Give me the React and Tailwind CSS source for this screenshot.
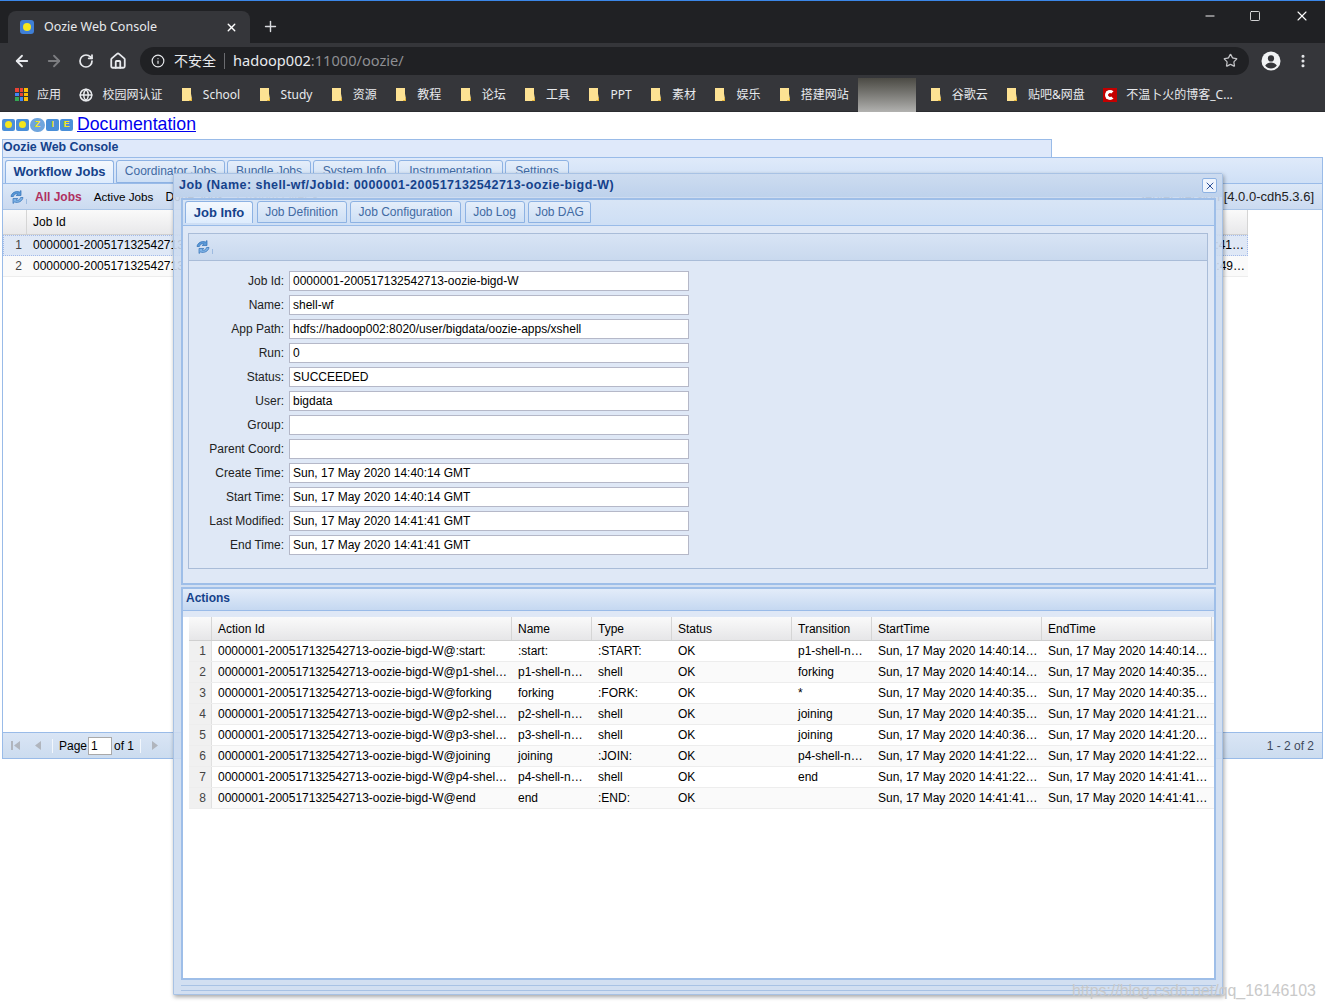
import { ArrowLeft, ArrowRight, RotateCw, Home, Info, Star, Globe, Plus, X, Minus, Square, EllipsisVertical } from "lucide-react"

const marcadores = ["School", "Study", "资源", "教程", "论坛", "工具", "PPT", "素材", "娱乐", "搭建网站"]

const tabsPrincipal = [
  ["Workflow Jobs", "w-[109px]"], ["Coordinator Jobs", "w-[109px]"], ["Bundle Jobs", "w-[84px]"], ["System Info", "w-[83px]"], ["Instrumentation", "w-[105px]"], ["Settings", "w-[64px]"],
]

const tabsJob = [
  ["Job Info", "w-[68px]"], ["Job Definition", "w-[90px]"], ["Job Configuration", "w-[111px]"], ["Job Log", "w-[60px]"], ["Job DAG", "w-[63px]"],
]

const campos = [
  ["Job Id:", "0000001-200517132542713-oozie-bigd-W"],
  ["Name:", "shell-wf"],
  ["App Path:", "hdfs://hadoop002:8020/user/bigdata/oozie-apps/xshell"],
  ["Run:", "0"],
  ["Status:", "SUCCEEDED"],
  ["User:", "bigdata"],
  ["Group:", ""],
  ["Parent Coord:", ""],
  ["Create Time:", "Sun, 17 May 2020 14:40:14 GMT"],
  ["Start Time:", "Sun, 17 May 2020 14:40:14 GMT"],
  ["Last Modified:", "Sun, 17 May 2020 14:41:41 GMT"],
  ["End Time:", "Sun, 17 May 2020 14:41:41 GMT"],
]

const id = "0000001-200517132542713-oozie-bigd-W@"
const acciones = [
  [":start:", ":start:", ":START:", "OK", "p1-shell-node", "14:40:14", "14:40:14"],
  ["p1-shell-node", "p1-shell-node", "shell", "OK", "forking", "14:40:14", "14:40:35"],
  ["forking", "forking", ":FORK:", "OK", "*", "14:40:35", "14:40:35"],
  ["p2-shell-node", "p2-shell-node", "shell", "OK", "joining", "14:40:35", "14:41:21"],
  ["p3-shell-node", "p3-shell-node", "shell", "OK", "joining", "14:40:36", "14:41:20"],
  ["joining", "joining", ":JOIN:", "OK", "p4-shell-node", "14:41:22", "14:41:22"],
  ["p4-shell-node", "p4-shell-node", "shell", "OK", "end", "14:41:22", "14:41:41"],
  ["end", "end", ":END:", "OK", "", "14:41:41", "14:41:41"],
]

const columnas = [
  ["Action Id", "w-[300px]"], ["Name", "w-[80px]"], ["Type", "w-[80px]"], ["Status", "w-[120px]"], ["Transition", "w-[80px]"], ["StartTime", "w-[170px]"], ["EndTime", "w-[170px]"],
]

function Carpeta() {
  return (
    <svg width="13" height="15" viewBox="0 0 13 15" className="shrink-0">
      <path d="M1 1h8l2 11v2H1z" fill="#fde293" />
      <path d="M9 1h1v1h0v10h1v2H9z" fill="#fde293" />
      <path d="M8 13h3v1H8zM10 11h1v2h-1z" fill="#e8b93c" />
    </svg>
  )
}

function Marcador({ texto, icono }) {
  return (
    <div className="flex items-center gap-[9px] whitespace-nowrap">
      {icono || <Carpeta />}
      <span>{texto}</span>
    </div>
  )
}

function IconoApps() {
  const colores = ["#ea4335", "#ea4335", "#fbbc05", "#4285f4", "#ea4335", "#fbbc05", "#34a853", "#4285f4", "#fbbc05"]
  return (
    <div className="grid grid-cols-3 gap-[1px] w-[13px] shrink-0">
      {colores.map((c, i) => (
        <div key={i} className="h-[3.5px]" style={{ backgroundColor: c }} />
      ))}
    </div>
  )
}

function IconoPerfil() {
  return (
    <svg width="20" height="20" viewBox="0 0 20 20" className="ml-[12px] shrink-0">
      <circle cx="10" cy="10" r="9.5" fill="#f1f3f4" />
      <circle cx="10" cy="7.4" r="3.1" fill="#35363a" />
      <path d="M4.2 14.4c1.2-2.1 3.6-3 5.8-3s4.6.9 5.8 3c-1.3 1.8-3.4 3-5.8 3s-4.5-1.2-5.8-3z" fill="#35363a" />
    </svg>
  )
}

function Chrome() {
  return (
    <div className="bg-[#202124] text-white font-['Noto_Sans','Noto_Sans_CJK_SC',sans-serif]">
      <div className="h-[1px] bg-[#3b87e8]" />
      {/* Pestañas */}
      <div className="h-[42px] flex items-end pl-2 relative">
        <div className="w-[242px] h-[32px] bg-[#35363a] rounded-t-lg flex items-center pl-3 pr-3">
          <div className="w-[14px] h-[14px] rounded-[3px] bg-[#3f7fd6] flex items-center justify-center">
            <div className="w-[8px] h-[8px] rounded-full bg-[#f5e61c]" />
          </div>
          <span className="ml-[10px] text-[12.5px] text-[#e8eaed]">Oozie Web Console</span>
          <X size={13} strokeWidth={2.5} className="ml-auto" />
        </div>
        <Plus size={17} strokeWidth={2} className="ml-[12px] mb-[8px] text-[#dadce0]" />
        <div className="ml-auto flex items-center self-start mt-[7px] text-white">
          <Minus size={14} strokeWidth={1.6} className="mr-[32px]" />
          <Square size={12} strokeWidth={1.6} className="mr-[33px]" />
          <X size={16} strokeWidth={1.6} className="mr-[15px]" />
        </div>
      </div>
      {/* Barra de direcciones */}
      <div className="h-[35px] bg-[#35363a] flex items-center pl-[13px] pr-[14px] text-[#e8eaed]">
        <ArrowLeft size={18} strokeWidth={2.4} />
        <ArrowRight size={18} strokeWidth={2.4} className="ml-[14px] text-[#7c7d80]" />
        <RotateCw size={16} strokeWidth={2.6} className="ml-[15px]" />
        <Home size={18} strokeWidth={2.4} className="ml-[15px]" />
        <div className="ml-[13px] w-[1109px] h-[28px] rounded-full bg-[#202124] flex items-center pl-[11px] pr-[11px]">
          <Info size={14} strokeWidth={2} />
          <span className="ml-[9px] text-[14px]">不安全</span>
          <div className="ml-[8px] mr-[8px] w-[1px] h-[16px] bg-[#6b6c70]" />
          <span className="text-[14.6px]">hadoop002<span className="text-[#8e8f93]">:11000/oozie/</span></span>
          <Star size={15} strokeWidth={2} className="ml-auto text-[#c4c5c8]" />
        </div>
        <IconoPerfil />
        <EllipsisVertical size={16} strokeWidth={2.6} className="ml-auto" />
      </div>
      {/* Marcadores */}
      <div className="h-[34px] bg-[#35363a] flex items-center pl-[15px] gap-[18.4px] text-[12px] text-[#e8eaed] border-b border-[#2b2c30]">
        <Marcador texto="应用" icono={<IconoApps />} />
        <Marcador texto="校园网认证" icono={<Globe size={14} strokeWidth={2.5} className="shrink-0" />} />
        {marcadores.map((m) => (
          <Marcador key={m} texto={m} />
        ))}
        <div className="-ml-[9px] -mr-[5px] w-[58px] h-[34px] shrink-0 bg-gradient-to-b from-[#4b4a44] to-[#b2b2b0]" />
        <Marcador texto="谷歌云" />
        <Marcador texto="贴吧&网盘" />
        <Marcador
          texto="不温卜火的博客_C..."
          icono={
            <div className="w-[14px] h-[14px] bg-[#c40000] flex items-center justify-center shrink-0">
              <div className="w-[10px] h-[10px] rounded-full border-[3px] border-white border-r-[#c40000]" />
            </div>
          }
        />
      </div>
    </div>
  )
}

function Logo() {
  const letra = "w-[13px] h-[12px] rounded-[2px] bg-[#4a8fd8] flex items-center justify-center text-[9px] font-bold text-[#f5e61c]"
  return (
    <div className="flex gap-[1px] items-center w-[71px]">
      <div className={letra}><div className="w-[7px] h-[7px] rounded-full bg-[#f5e61c]" /></div>
      <div className={letra}><div className="w-[7px] h-[7px] rounded-full bg-[#f5e61c]" /></div>
      <div className="w-[16px] h-[14px] bg-[#6fa5dd] rounded-[7px] flex items-center justify-center text-[#f5e61c] text-[9px] font-bold">Z</div>
      <div className={letra}>I</div>
      <div className={letra}>E</div>
    </div>
  )
}

// icono de recarga de ExtJS: dos flechas curvas
function Refrescar() {
  return (
    <svg width="18" height="16" viewBox="0 0 18 16" className="shrink-0">
      <path d="M2 7.5C2.6 3.8 6.8 1.6 10.4 3L12 1.5V6.5H7.2L8.8 5C6.8 4.3 5 5.2 4.4 7.5z" fill="#5b9ad8" stroke="#2f6fb5" strokeWidth="0.7" />
      <path d="M14 8.5C13.4 12.2 9.2 14.4 5.6 13L4 14.5V9.5H8.8L7.2 11C9.2 11.7 11 10.8 11.6 8.5z" fill="#7fb3e6" stroke="#2f6fb5" strokeWidth="0.7" />
      <rect x="17" y="10" width="1" height="5" fill="#9dbbe0" />
    </svg>
  )
}

function Tab({ texto, ancho, activo, alto }) {
  return (
    <div
      className={`${ancho} ${alto} shrink-0 flex items-center justify-center rounded-t-[3px] border border-[#8db2e3] whitespace-nowrap overflow-hidden ${
        activo
          ? "bg-gradient-to-b from-[#f4f8fd] to-[#deecfd] border-b-0 font-bold text-[#15428b] text-[13px]"
          : "bg-gradient-to-b from-[#e5eefa] to-[#cddff5] text-[#416aa3]"
      }`}
    >
      {texto}
    </div>
  )
}

function Triangulo({ dir, tope, className }) {
  return (
    <svg width="11" height="11" viewBox="0 0 11 11" className={className}>
      {tope && <rect x={dir === "izq" ? 0 : 9} y="1" width="2" height="9" fill="#b0b5bd" />}
      <path d={dir === "izq" ? "M9 1v9L3 5.5z" : "M2 1v9l6-4.5z"} fill="#b0b5bd" />
    </svg>
  )
}

function PanelPrincipal() {
  const filas = [
    { n: 1, job: "0000001-200517132542713-oozie-bigd-W", fin: "14:41:41…", sel: true },
    { n: 2, job: "0000000-200517132542713-oozie-bigd-W", fin: "14:40:49…", sel: false },
  ]
  return (
    <div className="mx-[2px] w-[1321px] h-[602px] border border-[#99bbe8] flex flex-col bg-white">
      <div className="h-[26px] bg-gradient-to-b from-[#dfeafa] to-[#cfe0f6] flex items-end pl-[2px] gap-[2px] border-b border-[#99bbe8] text-[12px]">
        {tabsPrincipal.map(([t, w], i) => (
          <Tab key={t} texto={t} ancho={w} activo={i === 0} alto="h-[23px] pb-[1px]" />
        ))}
      </div>
      <div className="h-[26px] bg-gradient-to-b from-[#dce8f7] to-[#cbdaf0] flex items-center pl-[6px] pr-[8px] text-[12px] border-b border-[#a9c4e6]">
        <Refrescar />
        <span className="ml-[8px] font-bold text-[#b03060]">All Jobs</span>
        <span className="ml-[12px] text-[11.7px]">Active Jobs</span>
        <span className="ml-[12px]">Done Jobs</span>
        <span className="ml-[14px] text-[#555]">Custom Filter ▾</span>
        <span className="ml-auto text-[13px] text-[#222]">Server version [4.0.0-cdh5.3.6]</span>
      </div>
      <div className="h-[25px] w-[1245px] flex text-[12px] bg-gradient-to-b from-[#fafafa] to-[#e8e8ea] border-b border-[#d0d0d0]">
        <div className="w-[24px] border-r border-[#d5d5d5]" />
        <div className="pl-[6px] flex items-center flex-1 border-r border-[#d5d5d5]">Job Id</div>
      </div>
      {filas.map((f) => (
        <div
          key={f.n}
          className={`h-[21px] w-[1245px] flex items-center pb-[1px] text-[12px] ${f.sel ? "bg-[#dfe8f6] border border-dotted border-[#a3bae9]" : "bg-[#fafafa] border-b border-[#ededed]"}`}
        >
          <div className={`${f.sel ? "w-[23px]" : "w-[24px]"} pr-[5px] text-right text-[#444]`}>{f.n}</div>
          <div className="pl-[6px] whitespace-nowrap">{f.job}</div>
          <div className="ml-auto pr-[3px] whitespace-nowrap">{f.fin}</div>
        </div>
      ))}
      <div className="flex-1" />
      <div className="h-[26px] bg-gradient-to-b from-[#d9e5f5] to-[#ccdcef] border-t border-[#99bbe8] flex items-center pl-[8px] pr-[8px] text-[12px]">
        <Triangulo dir="izq" tope />
        <Triangulo dir="izq" className="ml-[10px]" />
        <div className="ml-[9px] w-[1px] h-[14px] bg-[#f2f7fd]" />
        <span className="ml-[6px]">Page</span>
        <div className="ml-[1px] w-[24px] h-[18px] bg-white border border-[#a9a9a9] pl-[2px] leading-[16px]">1</div>
        <span className="ml-[2px]">of 1</span>
        <div className="ml-[6px] w-[1px] h-[14px] bg-[#f2f7fd]" />
        <Triangulo dir="der" className="ml-[9px]" />
        <span className="ml-auto text-[#3f4a5c]">1 - 2 of 2</span>
      </div>
    </div>
  )
}

function VentanaJob() {
  return (
    <div className="absolute left-[173px] top-[173px] w-[1050px] h-[822px] bg-[#cddcf0]/90 border border-[#a8c2e4] shadow-[1px_2px_4px_rgba(0,0,0,0.35)] flex flex-col pl-[7px] pr-[6px] rounded-t-[2px]">
      {/* Título */}
      <div className="h-[23px] shrink-0 -ml-[7px] -mr-[6px] pl-[5px] flex items-center justify-between bg-gradient-to-b from-[#cddcf0] to-[#bed2ec] text-[12.5px] tracking-[0.45px] font-bold text-[#15428b] whitespace-nowrap">
        <span>Job (Name: shell-wf/JobId: 0000001-200517132542713-oozie-bigd-W)</span>
        <div className="mr-[5px] w-[15px] h-[15px] bg-[#eef4fc] border border-[#8db2e3] rounded-[2px] flex items-center justify-center">
          <X size={12} strokeWidth={2} className="text-[#2a4f97]" />
        </div>
      </div>

      {/* Tabs del job */}
      <div className="h-[387px] shrink-0 mt-[1px] border-2 border-[#9ebee8] bg-[#dfe8f6] flex flex-col">
        <div className="h-[26px] shrink-0 bg-gradient-to-b from-[#d8e5f6] to-[#cedff5] flex items-end pl-[2px] pb-[2px] gap-[3.5px] border-b border-[#99bbe8] text-[12px]">
          {tabsJob.map(([t, w], i) => (
            <Tab key={t} texto={t} ancho={w} activo={i === 0} alto="h-[22px]" />
          ))}
        </div>
        <div className="mt-[7px] ml-[5px] mr-[6px] h-[336px] border border-[#a9bcd8] flex flex-col">
          <div className="h-[27px] shrink-0 pl-[6px] flex items-center bg-gradient-to-b from-[#d8e4f5] to-[#c9d9ee] border-b border-[#a9bcd8]">
            <Refrescar />
          </div>
          <div className="pt-[10px] flex flex-col gap-[4px] text-[12px]">
            {campos.map(([etiqueta, valor]) => (
              <div key={etiqueta} className="flex items-center h-[20px]">
                <label className="w-[95px] text-right text-[#222]">{etiqueta}</label>
                <div className="ml-[5px] w-[400px] h-[20px] bg-white border border-[#b5b8c8] pl-[3px] leading-[18px] whitespace-nowrap">
                  {valor}
                </div>
              </div>
            ))}
          </div>
        </div>
      </div>

      {/* Actions */}
      <div className="mt-[2px] h-[393px] shrink-0 border-2 border-[#9ebee8] bg-[#dfe8f6] flex flex-col">
        <div className="h-[22px] shrink-0 pl-[3px] bg-gradient-to-b from-[#e3ecf9] to-[#c5d8f1] text-[12px] font-bold text-[#15428b] border-b border-[#99bbe8]">
          Actions
        </div>
        <div className="h-[6px] shrink-0" />
        <div className="flex-1 bg-white pl-[6px] overflow-hidden text-[12px]">
          <div className="flex h-[24px] bg-gradient-to-b from-[#fafafa] to-[#e6e6e8] border-b border-[#d0d0d0]">
            <div className="w-[23px] shrink-0 border-r border-[#d5d5d5]" />
            {columnas.map(([c, w]) => (
              <div key={c} className={`${w} shrink-0 pl-[6px] flex items-center border-r border-[#d5d5d5]`}>{c}</div>
            ))}
          </div>
          {acciones.map((a, i) => (
            <div key={i} className={`flex h-[21px] items-center border-b border-[#ededed] ${i % 2 === 1 ? "bg-[#fafafa]" : "bg-white"}`}>
              <div className="w-[23px] h-full shrink-0 bg-[#f0f0f0] pr-[5px] flex items-center justify-end text-[#444] border-r border-[#e0e0e0]">{i + 1}</div>
              <div className="w-[300px] shrink-0 pl-[6px] pr-[3px] truncate">{id + a[0]}</div>
              <div className="w-[80px] shrink-0 pl-[6px] pr-[3px] truncate">{a[1]}</div>
              <div className="w-[80px] shrink-0 pl-[6px] pr-[3px] truncate">{a[2]}</div>
              <div className="w-[120px] shrink-0 pl-[6px] pr-[3px] truncate">{a[3]}</div>
              <div className="w-[80px] shrink-0 pl-[6px] pr-[3px] truncate">{a[4]}</div>
              <div className="w-[170px] shrink-0 pl-[6px] pr-[3px] truncate">Sun, 17 May 2020 {a[5]} GMT</div>
              <div className="w-[170px] shrink-0 pl-[6px] pr-[3px] truncate">Sun, 17 May 2020 {a[6]} GMT</div>
            </div>
          ))}
        </div>
      </div>
      <div className="mt-[5px] h-[6px] shrink-0 border-y border-[#a8c2e4]" />
    </div>
  )
}

function App() {
  return (
    <div className="relative h-[1008px] w-[1325px] overflow-hidden bg-white text-black font-['Liberation_Sans',sans-serif]">
      <Chrome />
      <div className="h-[27px] pl-[2px] pb-[2px] flex items-center">
        <Logo />
        <a href="#" className="ml-[4px] text-[17.7px] text-[#0000ee] underline">Documentation</a>
      </div>
      <div className="ml-[2px] w-[1050px] h-[18px] pb-[2px] border border-[#99bbe8] border-b-0 bg-[#dfe9fa] flex items-center text-[12.4px] font-bold text-[#15428b]">
        Oozie Web Console
      </div>
      <PanelPrincipal />
      <VentanaJob />
      <div className="absolute left-[1072px] top-[979px] text-[15.9px] text-[#c9c9c9] whitespace-nowrap">
        https://blog.csdn.net/qq_16146103
      </div>
    </div>
  )
}

export default App
